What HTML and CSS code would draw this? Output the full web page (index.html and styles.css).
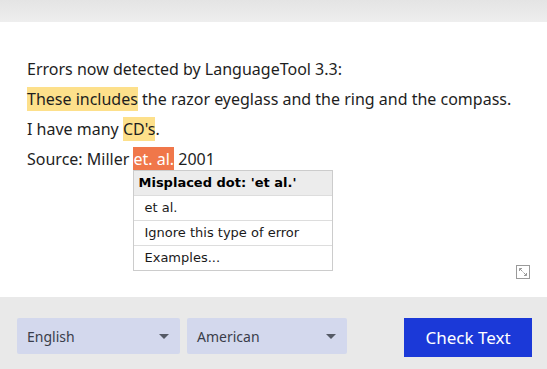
FILE: index.html
```html
<!DOCTYPE html>
<html>
<head>
<title>LanguageTool</title>
<meta charset="UTF-8">
<meta name="viewport" content="width=device-width, initial-scale=1.0">
<link rel="stylesheet" href="styles.css">
</head>
<body>

<div class="topbar"></div>

<div class="editor">
  <p>Errors now detected by LanguageTool 3.3:</p>
  <p><span class="hl-grammar">These includes</span> the razor eyeglass and the ring and the compass.</p>
  <p>I have many <span class="hl-grammar">CD's</span>.</p>
  <p>Source: Miller <span class="hl-wrap"><span class="hl-typo">et. al.</span>
      <span class="popup">
        <span class="popup-title">Misplaced dot: 'et al.'</span>
        <span class="popup-item">et al.</span>
        <span class="popup-item">Ignore this type of error</span>
        <span class="popup-item">Examples...</span>
      </span></span> 2001</p>

  <div class="resize">
    <svg width="14" height="14" viewBox="0 0 14 14">
      <rect x="0.5" y="0.5" width="13" height="13" fill="none" stroke="#9a9a9a"/>
      <path d="M3.5 3.5 L6.5 6.5 M3.5 6 V3.5 H6" fill="none" stroke="#9a9a9a"/>
      <path d="M10.5 10.5 L7.5 7.5 M10.5 8 V10.5 H8" fill="none" stroke="#9a9a9a"/>
    </svg>
  </div>
</div>

<div class="footer">
  <div class="select lang">English <span class="caret"></span></div>
  <div class="select variant">American <span class="caret"></span></div>
  <div class="spacer"></div>
  <button class="check">Check Text</button>
</div>

</body>
</html>
```
FILE: styles.css
```css
body {
  margin: 0;
  font-family: "Noto Sans", "Open Sans", sans-serif;
  color: #1e1e1e;
  background-color: #fff;
}

.topbar {
  height: 22px;
  background: linear-gradient(#e4e4e4, #eeeeee);
}

.editor {
  height: 275px;
  box-sizing: border-box;
  padding: 32px 0 0 27px;
  font-size: 16px;
  line-height: 30px;
  display: flex;
  flex-direction: column;
}

.editor p {
  margin: 0;
  white-space: nowrap;
}

.hl-grammar {
  background-color: #fde08b;
  padding: 1px 0;
}

.hl-wrap {
  position: relative;
}

.hl-typo {
  background-color: #f0774a;
  color: #fff;
  padding: 1px 0;
}

.popup {
  position: absolute;
  left: 0;
  top: 22px;
  width: 200px;
  box-sizing: border-box;
  border: 1px solid #cccccc;
  background-color: #fff;
  font-family: "DejaVu Sans", Verdana, sans-serif;
  font-size: 13px;
  line-height: 24px;
  color: #1a1a1a;
  display: flex;
  flex-direction: column;
}

.popup-title {
  background-color: #ececec;
  font-weight: bold;
  padding: 0 4px;
  color: #000;
}

.popup-item {
  border-top: 1px solid #dddddd;
  padding: 0 10px;
}

.resize {
  align-self: flex-end;
  margin: auto 17px 18px 0;
  height: 14px;
}

.resize svg {
  display: block;
}

.footer {
  height: 72px;
  box-sizing: border-box;
  background-color: #e9e9e9;
  padding: 21px 15px 0 17px;
  display: flex;
  align-items: flex-start;
}

.select {
  height: 36px;
  box-sizing: border-box;
  background-color: #d3d8ed;
  border-radius: 2px;
  display: flex;
  align-items: center;
  justify-content: space-between;
  padding: 0 11px 0 10px;
  font-size: 14px;
  color: #3a3d4a;
}

.lang {
  width: 163px;
  margin-right: 7px;
}

.variant {
  width: 160px;
}

.caret {
  width: 0;
  height: 0;
  border-left: 5px solid transparent;
  border-right: 5px solid transparent;
  border-top: 5px solid #555a66;
}

.spacer {
  flex: 1;
}

.check {
  width: 128px;
  height: 39px;
  border: none;
  background-color: #1b39d8;
  color: #fff;
  font-family: "Noto Sans", "Open Sans", sans-serif;
  font-size: 17px;
  padding: 0;
}
```
